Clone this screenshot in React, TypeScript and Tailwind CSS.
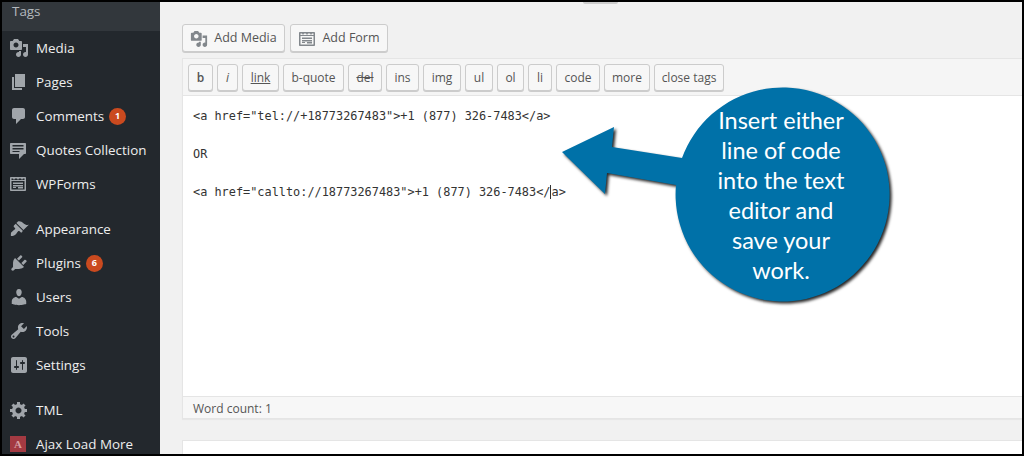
const sans = "font-['Open_Sans','Liberation_Sans',sans-serif]";

function Dash({ d, className = "" }: { d: string; className?: string }) {
  return (
    <svg viewBox="0 0 20 20" width="20" height="20" className={className} fill="#a0a5aa" fillRule="evenodd">
      <path d={d} />
    </svg>
  );
}

const media =
  "M13 11V4c0-.55-.45-1-1-1h-1.67L9 1H5L3.67 3H2c-.55 0-1 .45-1 1v7c0 .55.45 1 1 1h10c.55 0 1-.45 1-1zM7 4.5c1.38 0 2.5 1.12 2.5 2.5S8.38 9.5 7 9.5 4.5 8.38 4.5 7 5.62 4.5 7 4.5zM14 6h5v10.5c0 1.38-1.12 2.5-2.5 2.5S14 17.88 14 16.5s1.12-2.5 2.5-2.5c.17 0 .34.02.5.05V9h-3V6zm-4 8.05V13h2v3.5c0 1.38-1.12 2.5-2.5 2.5S7 17.88 7 16.5 8.12 14 9.5 14c.17 0 .34.02.5.05z";
const pages = "M6 15V2h10v13H6zm-1 1h8v2H3V5h2v11z";
const comments = "M5 2h9c1.1 0 2 .9 2 2v7c0 1.1-.9 2-2 2h-2l-5 5v-5H5c-1.1 0-2-.9-2-2V4c0-1.1.9-2 2-2z";
const quotes =
  "M2 3h14c.55 0 1 .45 1 1v9c0 .55-.45 1-1 1h-1l-5 5v-5H2c-.55 0-1-.45-1-1V4c0-.55.45-1 1-1zM3.500 5v1.500h11V5h-11zM3.500 8v1.500h11V8h-11zM3.500 11v1h7v-1h-7z";
const forms =
  "M2 3h14c.55 0 1 .45 1 1v12c0 .55-.45 1-1 1H2c-.55 0-1-.45-1-1V4c0-.55.45-1 1-1zM2.500 4.500V6h13V4.500h-1.500L13 6l-1-1.500h-2L9 6 8 4.500H6L5 6 4 4.500H2.500zM2.500 7v8.500h13V7h-13zM4 8.500h10V10H4V8.500zM4 11h10v1.500H4V11zM9 13h5v1.500H9V13zM4 13h3v1H4v-1z";
const appearance =
  "M14.48 11.06L7.41 3.99l1.5-1.5c.5-.56 2.3-.47 3.51.32 1.21.8 1.43 1.28 2.91 2.1 1.18.64 2.45 1.26 4.45.85zm-.71.71L6.7 4.7 4.93 6.47c-.39.39-.39 1.02 0 1.41l1.06 1.06c.39.39.39 1.03 0 1.42-.6.6-1.43 1.11-2.21 1.69-.35.26-.7.53-1.01.84C1.43 13.23 2 17 2 17s2.500.500 4.600-1.600c.31-.31.58-.66.84-1.01.58-.78 1.09-1.61 1.69-2.21.39-.39 1.03-.39 1.42 0l1.06 1.06c.39.39 1.02.39 1.41 0z";
const plugins =
  "M13.11 4.36L9.87 7.6 8 5.73l3.24-3.24c.35-.34 1.05-.2 1.56.32.52.51.66 1.21.31 1.55zm-8 1.77l.91-1.12 9.01 9.01-1.19.84c-.71.71-2.63 1.16-3.82 1.16H6.14L4.9 17.26c-.59.59-1.54.59-2.12 0-.59-.58-.59-1.53 0-2.12l1.24-1.24v-3.88c0-1.13.4-3.19 1.09-3.89zm7.26 3.97l3.24-3.24c.34-.35 1.04-.21 1.55.31.52.51.66 1.21.31 1.55l-3.24 3.25z";
const users =
  "M10 9.25c-2.27 0-2.73-3.44-2.73-3.44C7 4.02 7.82 2 9.97 2c2.16 0 2.98 2.02 2.71 3.81 0 0-.41 3.44-2.68 3.44zm0 2.57L12.72 10c2.39 0 4.52 2.33 4.52 4.53v2.49s-3.65 1.13-7.24 1.13c-3.65 0-7.24-1.13-7.24-1.13v-2.49c0-2.25 1.94-4.48 4.47-4.48z";
const tools =
  "M16.68 9.77c-1.34 1.34-3.3 1.67-4.95.99l-5.41 6.52c-.99.99-2.59.99-3.58 0s-.99-2.59 0-3.57l6.52-5.42c-.68-1.65-.35-3.61.99-4.95 1.28-1.28 3.12-1.62 4.72-1.06l-2.89 2.89 2.82 2.82 2.86-2.87c.53 1.58.18 3.39-1.08 4.65zM3.81 16.21c.4.39 1.04.39 1.43 0 .4-.4.4-1.04 0-1.43-.39-.4-1.03-.4-1.43 0-.39.39-.39 1.03 0 1.43z";
const settings =
  "M18 16V4c0-1.1-.9-2-2-2H4c-1.1 0-2 .9-2 2v12c0 1.1.9 2 2 2h12c1.1 0 2-.9 2-2zM8 11h1c.55 0 1 .45 1 1s-.45 1-1 1H8v1.500c0 .28-.22.5-.5.5s-.5-.22-.5-.5V13H6c-.55 0-1-.45-1-1s.45-1 1-1h1V5.500c0-.28.22-.5.5-.5s.5.22.5.5V11zm5-2h-1c-.55 0-1-.45-1-1s.45-1 1-1h1V5.500c0-.28.22-.5.5-.5s.5.22.5.5V7h1c.55 0 1 .45 1 1s-.45 1-1 1h-1v5.500c0 .28-.22.5-.5.5s-.5-.22-.5-.5V9z";
const gear =
  "M18 12h-2.18c-.17.7-.44 1.35-.81 1.93l1.54 1.54-2.1 2.1-1.54-1.54c-.58.36-1.23.63-1.91.79V19H8v-2.18c-.68-.16-1.33-.43-1.91-.79l-1.54 1.54-2.12-2.12 1.54-1.54c-.36-.58-.63-1.23-.79-1.91H1V9.03h2.17c.16-.7.44-1.35.8-1.94L2.43 5.55l2.1-2.1 1.54 1.54c.58-.37 1.24-.64 1.93-.81V2h3v2.18c.68.16 1.33.43 1.91.79l1.54-1.54 2.12 2.12-1.54 1.54c.36.59.64 1.24.8 1.94H18V12zm-8.5 1.500c1.66 0 3-1.34 3-3s-1.34-3-3-3-3 1.34-3 3 1.34 3 3 3z";

function Row({ icon, label, badge }: { icon: React.ReactNode; label: string; badge?: string }) {
  return (
    <div className="flex h-[34px] items-center shrink-0">
      <div className="ml-[7px] flex w-[27px] justify-start">{icon}</div>
      <span className="text-[13.400px] text-[#eeeeee]">{label}</span>
      {badge && (
        <span className="ml-[5px] flex h-[17px] w-[17px] items-center justify-center rounded-full bg-[#ca4a1f] text-[9px] font-bold text-white">
          {badge}
        </span>
      )}
    </div>
  );
}

function QT({ label, w, className = "" }: { label: string; w: string; className?: string }) {
  return (
    <div
      className={`flex h-[27px] items-center justify-center rounded-[3px] border border-[#cccccc] bg-[#f7f7f7] pt-px text-[12px] text-[#555555] shadow-[0_1px_0_#cccccc] ${w} ${className}`}
    >
      {label}
    </div>
  );
}

export default function App() {
  return (
    <div className={`relative flex h-[456px] w-[1024px] overflow-hidden border-2 border-black bg-[#f1f1f1] ${sans}`}>
      <aside className="flex w-[158px] shrink-0 flex-col overflow-hidden bg-[#23282d]">
        <div className="h-[29px] shrink-0 bg-[#32373c] pl-[10px] text-[13.400px] leading-[18px] text-[#b4b9be]">Tags</div>
        <Row icon={<Dash d={media} />} label="Media" />
        <Row icon={<Dash d={pages} />} label="Pages" />
        <Row icon={<Dash d={comments} />} label="Comments" badge="1" />
        <Row icon={<Dash d={quotes} />} label="Quotes Collection" />
        <Row icon={<Dash d={forms} />} label="WPForms" />
        <div className="h-[11px] shrink-0" />
        <Row icon={<Dash d={appearance} />} label="Appearance" />
        <Row icon={<Dash d={plugins} />} label="Plugins" badge="6" />
        <Row icon={<Dash d={users} />} label="Users" />
        <Row icon={<Dash d={tools} />} label="Tools" />
        <Row icon={<Dash d={settings} />} label="Settings" />
        <div className="h-[11px] shrink-0" />
        <Row icon={<Dash d={gear} />} label="TML" />
        <Row
          icon={
            <div className="ml-px flex h-[16px] w-[16px] items-center justify-center bg-[#a33a42] font-['Liberation_Serif',serif] text-[11px] font-bold text-[#d8a0a4]">
              A
            </div>
          }
          label="Ajax Load More"
        />
      </aside>

      <main className="flex min-w-0 flex-1 flex-col pl-[22px] pt-[22px]">
        <div className="flex h-[28px] shrink-0 gap-[5px]">
          <div className="flex w-[103px] items-center justify-center gap-[6px] rounded-[3px] border border-[#cccccc] bg-[#f7f7f7] pt-px text-[12.500px] text-[#555555] shadow-[0_1px_0_#cccccc]">
            <svg viewBox="0 0 20 20" width="18" height="18" fill="#82878c" fillRule="evenodd"><path d={media} /></svg>
            Add Media
          </div>
          <div className="flex w-[98px] items-center justify-center gap-[6px] rounded-[3px] border border-[#cccccc] bg-[#f7f7f7] pt-px text-[12.500px] text-[#555555] shadow-[0_1px_0_#cccccc]">
            <svg viewBox="0 0 18 20" width="18" height="20" fill="#82878c" fillRule="evenodd"><path d={forms} /></svg>
            Add Form
          </div>
        </div>
        <section className="mt-[6px] flex h-[361px] shrink-0 flex-col border-l border-t border-[#e5e5e5] shadow-[0_1px_1px_rgba(0,0,0,0.04)]">
          <div className="flex h-[37px] shrink-0 items-start gap-[4px] border-b border-[#e5e5e5] bg-[#f5f5f5] pl-[5px] pt-[5px]">
            <QT label="b" w="w-[25px]" className="font-semibold" />
            <QT label="i" w="w-[21px]" className="italic" />
            <QT label="link" w="w-[37px]" className="underline" />
            <QT label="b-quote" w="w-[61px]" />
            <QT label="del" w="w-[34px]" className="line-through" />
            <QT label="ins" w="w-[33px]" />
            <QT label="img" w="w-[38px]" />
            <QT label="ul" w="w-[28px]" />
            <QT label="ol" w="w-[27px]" />
            <QT label="li" w="w-[24px]" />
            <QT label="code" w="w-[44px]" />
            <QT label="more" w="w-[46px]" />
            <QT label="close tags" w="w-[70px]" />
          </div>
          <div className="flex h-[300px] shrink-0 flex-col bg-white pl-[10px] pt-[11px] font-['DejaVu_Sans_Mono',monospace] text-[11.880px] leading-[19px] text-[#333333]">
            <div>{'<a href="tel://+18773267483">+1 (877) 326-7483</a>'}</div>
            <div className="mt-[19px]">OR</div>
            <div className="mt-[19px]">
              {'<a href="callto://18773267483">+1 (877) 326-7483</'}
              <span className="border-l border-[#333333]">a</span>
              {">"}
            </div>
          </div>
          <div className="flex h-[23px] shrink-0 items-center border-y border-[#e5e5e5] bg-[#f7f7f7] pl-[10px] pt-[2px] text-[12px] text-[#555555]">
            Word count: 1
          </div>
        </section>
        <div className="mt-[21px] flex-1 border-l border-t border-[#e5e5e5] bg-white" />
      </main>

      <div className="absolute left-[581px] top-0 h-[2px] w-[35px] rounded-b-[2px] bg-[#cccccc]" />

      {/* Callout annotation */}
      <svg className="absolute left-[-2px] top-[-2px] drop-shadow-[2px_2px_1.500px_rgba(0,0,0,0.85)]" width="1024" height="456" viewBox="0 0 1024 456">
        <path
          d="M562 152 L614 127 L612 147 L682 158 A107 107 0 1 1 676 185 L607 173 L605 194 Z"
          fill="#0071a8"
        />
      </svg>
      <div className="absolute left-[679px] top-[103px] w-[200px] text-center font-['Lato','Open_Sans',sans-serif] text-[23.500px] leading-[30px] text-white">
        Insert either
        <br />
        line of code
        <br />
        into the text
        <br />
        editor and
        <br />
        save your
        <br />
        work.
      </div>
    </div>
  );
}
